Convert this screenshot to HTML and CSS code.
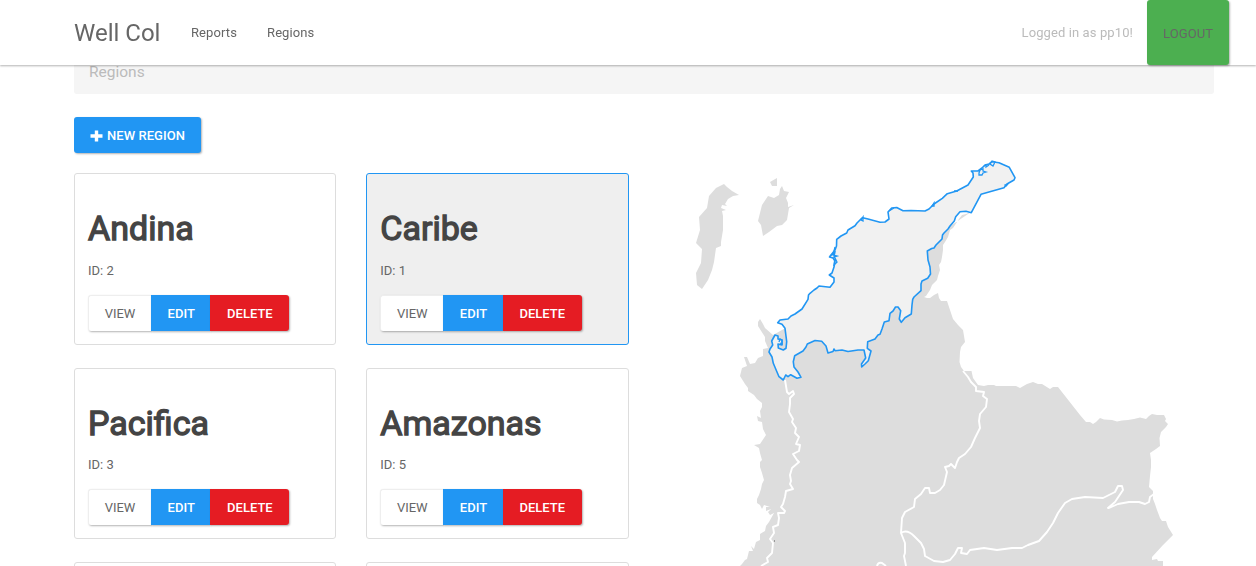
FILE: index.html
```html
<!DOCTYPE html>
<html lang="en">
<head>
<meta charset="utf-8">
<title>Well Col</title>
<link rel="stylesheet" href="styles.css">
</head>
<body>
<header class="navbar">
  <a class="brand">Well Col</a>
  <nav class="links"><a>Reports</a><a>Regions</a></nav>
  <span class="user">Logged in as pp10!</span>
  <a class="logout">LOGOUT</a>
</header>
<main class="container">
  <div class="breadcrumb">Regions</div>
  <div class="content">
    <section class="list">
      <a class="btn primary new"><svg class="plus" viewBox="0 0 13 12"><path d="M4.8 0.5h3.4v3.8H12.5v3.4H8.2v3.8H4.8V7.7H0.5V4.3h4.3z"/></svg>NEW REGION</a>
      <div class="cards">
        <article class="card"><h2>Andina</h2><p>ID: 2</p><div class="group"><a class="btn view">VIEW</a><a class="btn primary">EDIT</a><a class="btn danger">DELETE</a></div></article>
        <article class="card active"><h2>Caribe</h2><p>ID: 1</p><div class="group"><a class="btn view">VIEW</a><a class="btn primary">EDIT</a><a class="btn danger">DELETE</a></div></article>
        <article class="card"><h2>Pacifica</h2><p>ID: 3</p><div class="group"><a class="btn view">VIEW</a><a class="btn primary">EDIT</a><a class="btn danger">DELETE</a></div></article>
        <article class="card"><h2>Amazonas</h2><p>ID: 5</p><div class="group"><a class="btn view">VIEW</a><a class="btn primary">EDIT</a><a class="btn danger">DELETE</a></div></article>
        <article class="card"></article>
        <article class="card"></article>
      </div>
    </section>
    <svg class="map" viewBox="659 117 555 449">
      <g class="land">
        <path d="M971 212L966 214 962 215 959 219 957 222 953 228 950 230 948 237 945 242 943 245 943 250 942 257 941 262 939 265 940 270 938 276 937 280 934 283 932 285 930 290 928 293 926 296 924 297 927 298 930 298 934 295 938 293 939 298 941 301 947 301 948 304 953 319 958 325 963 330 964 336 965 342 961 347 960 352 959.5 362 961 367 964 371 971.5 371 973 378 978 385 984 386 988 385 994 385 996 386 1002 386 1010 386 1016 386 1020 388 1027 384 1033 382 1038 384 1042 384 1050 389 1053 387 1058 387 1080 415 1086 422 1090 422 1093 424 1096 422 1100 418 1104 419.500 1112 420 1117 421.500 1122 420.500 1128 420 1134 419 1140 417.500 1146 419 1149 416 1152 414 1157 415 1164 415 1166 419 1165 421 1168 424 1166 427 1161 432 1159.500 438 1160 446 1156 449 1150 453 1151 460 1151 467 1150 476 1149 487 1153 491 1153 499 1155 504 1157 510 1160 518 1162 521 1166 521 1168 527 1173 535 1163 545 1152 557 1152 560 1157 559 1158 561 1163 561 1163 566 740 566 742 564 745 560 747 559 749 551 753 551 751 546 754 549 756 542 760 540 760 534 765 531 766 526 769 522 774 513 770 515 768 512 771 509 766 511 766 507 770 507 764 505 762 509 760 505 757 503 757 499 759 495 761 489 762 484 764 480 762 473 760 467 760 462 762 460 760 453 759 448 754 445 760 444 766 435 763 429 762 422 758 421 757 416 761 418 760 411 762 407 762 403 757 399 754 395 748 391 748 388 745 384 740 376 742 368 747 366 744 357 747 357 750 364 755 363 758 358 763 356 763 349 768 348 765 341 765 337 758 326 758 322 760 319 763 324 765 328 773 335 800 320 900 260z"/>
        <path d="M724 184L727 187 732 191 739 195 733 196 728 199 725 204 727 206 722 205 721 208 726 210 722 211 723 216 723 230 721 242 721 246 716 248 714 262 712 270 708 280 702 289 697 285 696 273 701 263 702 249 696 243 700 230 699 217 707 208 709 196 716 188z"/>
        <path d="M770 182L777 178 777 186 772 186z"/>
        <path d="M782 186L784 191 789 192 786 198 788 203 788 207 794 205 789 208 787 220 782 225 777 226 769 232 763 236 761 225 758 221 762 205 768 196 774 198 779 195 780 189z"/>
      </g>
      <g class="borders">
        <path d="M785 380L787 392 789 394 793 391 794 394 790 398 790 404 789 412 793 419 792 422 796 428 795 433 799 437 796 444 800 445 799 451 793 454 797 460 799 462 792 468 790 475 791 481 790 484 793 489 786 491 785 497 783 504 781 507 785 511 784 513 778 513 779 518 778 525 773 527 774 533 770 539 773 543 772 553 767 558 768 562 761 566"/>
        <path d="M963 371L968 377 971 382 976 387 976 391 984 392 983 396 987 399 986 407 980 414 979 421 980 428 975 438 971 447 965 454 959 458 957 462 955 468 951 464 949 466 945 467 947 472 944 485 940 490 935 493 930 493 929 488 925 488 921 494 915 499 914 507 905 512 902 518 901 533 905 543 905 553 904 556 906 566"/>
        <path d="M901 533Q907 529 914 536L921 543 924 549 925 556 934 561 943 562 950 560 955 554 958 548 962 548 961 553 967 554 970 550 984 548 997 550 1012 548 1022 548 1028 545 1039 541 1047 532 1053 523 1058 513 1065 503 1072 499 1085 497 1103 498 1115 492 1118 486 1122 486 1123 490 1119 496 1115 502 1108 508 1109 508 1118 504 1129 502 1139 502 1145 504 1149 502 1150 497 1154 494"/>
        <path d="M877 566Q878 562 882 563L886 566"/>
      </g>
      <path class="selected" d="M862.7 217.7L868 219 880 222.300 885 222 889 219 888 212 891.700 208 896.700 207.500 903 210.700 911 210.500 925 211 929 209 934 204 942.300 198.300 947.300 193.700 956.700 191 968 185 973.300 177 973 173 971.300 171 978 171 982 168 985 165 989 164 992 161.700 999 162.700 1009.300 167.300 1015 177.700 1014 180 1007 184 1004 187.700 981 194.300 971.300 212.700 966 211.300 960 211.700 955.700 216.700 954.300 221 950 226 948 229 944 233 942.500 235 942 239 936 245 934 248 931.700 248.500 927.300 251 928 260 930 267 930.500 274 927.700 278.300 922 281 921 284 921 290.700 914 297 912.700 299.300 912 305 911.300 314 905 317.700 901.300 322.300 899.300 319 900.700 310.700 898 307 895.500 307 893 311 890 313.300 889 320.700 884.300 322 882 329 880 334.300 878 335 875 339 867.700 341.700 867.300 348.300 871 351 868.300 360.700 865 364 861.700 367 861.500 364 865.700 358 864 350 858 350 848 351.500 842 350 835 350.700 834 349 833 351.500 828 353 826 346 821.700 341.300 815 340.500 807.300 344 806 347 803 351 794.700 355.700 793.300 361.700 794 367 798 372 801 377.300 797 378.300 790.700 374.700 788 376.700 785.700 375 783.300 380 779 376.700 773.300 363.300 772 357 769 352 770 349 772.700 345 771.700 341 775 335 778 336 778 339 782 340 782 345 778 344 778.300 348 783.300 350 786 348.300 786.700 341.700 785 328.300 782 324.300 777.700 322.700 780 320 788 319 791 316 795 314 802 309 808 299.300 808.500 295 810 293.300 814 290 817 288 819 286 830 287.300 834 282 834 278 829.300 275 832 273 834 267 835 261 833 258 829.500 257 835 250 836.500 246 836.700 239.300 841 236 846.700 233 848 230 855 225.700 857 223 861 219z"/>
      <g class="islets">
        <path d="M830 256l5-4-1 5 3-1-4-1 2-8M834 265l1-7 2 4zM861 220l2-3v4zM889 211l5-3M932 206l2-3v3zM954 191h4M990 164l2-3 3 1-2 4zM984 166l2-1v2l3-2"/>
        <path d="M979 173l1-3 3-1 0 2 3 1-3 1-1 2-3 0zM1005 185l3-1-2 2zM779 342l1-3 2 1 0 4-2-1"/>
      </g>
      <path class="speck" d="M774 540h1v2h-1z"/>
    </svg>
  </div>
</main>
</body>
</html>
```

FILE: styles.css
```css
* { box-sizing: border-box; }
body {
  margin: 0;
  height: 566px;
  overflow: hidden;
  background: #fff;
  color: #666;
  font: 13px/24px Roboto, sans-serif;
  letter-spacing: .1px;
}
.navbar {
  position: fixed;
  top: 0;
  left: 0;
  right: 0;
  z-index: 2;
  height: 65px;
  display: flex;
  align-items: center;
  padding: 0 27px 0 74px;
  background: #fff;
  box-shadow: 0 1px 2px rgba(0, 0, 0, .3);
}
.brand { padding-top: 1px; font-size: 24px; letter-spacing: 0; width: 87px; margin-right: 30px; white-space: nowrap; }
.links { display: flex; gap: 30px; }
.user { margin-left: auto; margin-right: 14px; color: #bbb; }
.logout {
  width: 82px;
  height: 65px;
  padding-top: 2px;
  line-height: 64px;
  text-align: center;
  background: #4caf50;
  border-radius: 3px;
  box-shadow: 1px 1px 2px rgba(0, 0, 0, .3);
}
.container { width: 1140px; height: 508px; overflow: hidden; margin: 58px 0 0 74px; }
.breadcrumb {
  height: 36px;
  padding: 2px 15px;
  border-radius: 0 0 3px 3px;
  background: #f5f5f5;
  color: #bbb;
  font-size: 15.5px;
  letter-spacing: 0;
}
.content { display: flex; gap: 30px; padding-top: 23px; }
.list { width: 555px; flex: none; }
.btn {
  display: inline-flex;
  align-items: center;
  justify-content: center;
  height: 36px;
  padding: 1px 0 0;
  font-weight: 500;
  letter-spacing: 0;
  box-shadow: 1px 1px 2px rgba(0, 0, 0, .3);
}
.primary { background: #2196f3; color: #fff; }
.danger { background: #e51c23; color: #fff; }
.new { width: 127px; border-radius: 3px; gap: 4px; letter-spacing: .05px; white-space: nowrap; }
.plus { width: 13px; height: 12px; fill: #fff; }
.cards {
  display: grid;
  grid-template-columns: 262.3px 262.7px;
  grid-auto-rows: 171.5px;
  gap: 23px 30px;
  margin-top: 20px;
}
.card { border: 1px solid #ddd; border-radius: 3px; padding: 31.4px 13px 0; }
.active { background: #efefef; border-color: #2196f3; }
.card h2 {
  margin: 0;
  color: #444;
  font-size: 34px;
  line-height: 46px;
  font-weight: 400;
  letter-spacing: 0;
  -webkit-text-stroke: 1.3px #444;
}
.card p { margin: 7.5px 0 12px; letter-spacing: 0; }
.group { display: flex; }
.group .btn { width: 59.4px; padding: 1.4px 0 0 1px; }
.group .view.view {
  width: 63px;
  padding: .4px 0 0;
  background: #fff;
  font-weight: 400;
  border-radius: 3px 0 0 3px;
  border-top: 1px solid #eee;
  border-left: 1px solid #eee;
}
.group .btn.danger { width: 79px; padding-left: 0; border-radius: 0 3px 3px 0; }
.map { display: block; width: 555px; height: 449px; flex: none; }
.land { fill: #ddd; }
.borders { fill: none; stroke: #fff; stroke-width: 1.900; stroke-linejoin: round; }
.selected { fill: #f1f1f1; stroke: #2196f3; stroke-width: 1.600; stroke-linejoin: round; }
.islets { fill: none; stroke: #2196f3; stroke-width: 1.300; }
.speck { fill: #999; }
```
